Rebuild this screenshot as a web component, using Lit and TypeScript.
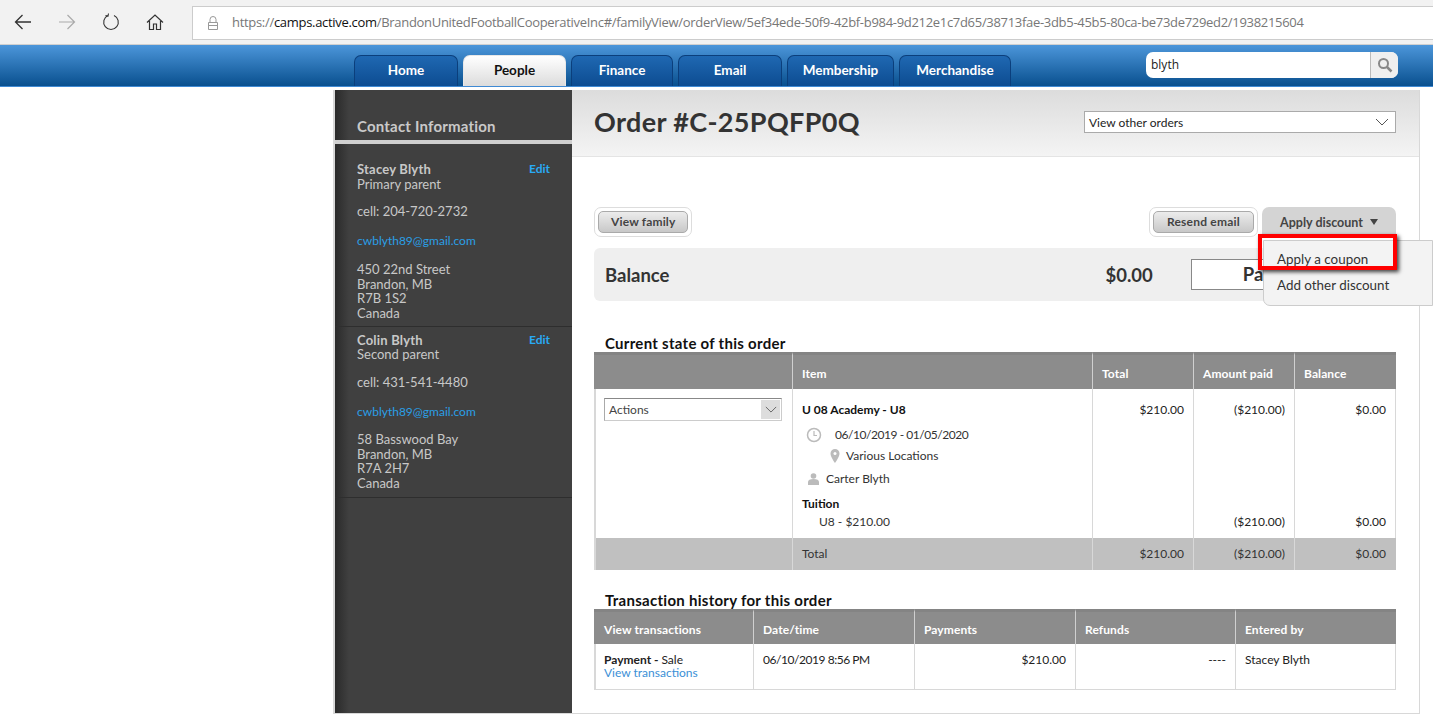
import { LitElement, html, css, svg } from "lit";
import { customElement } from "lit/decorators.js";

const TABS = ["Home", "People", "Finance", "Email", "Membership", "Merchandise"];
const TAB_W = [104, 103, 102, 104, 107, 112];
const chevron = svg`<path d="M1 1 L7 7 L13 1" fill="none" stroke="#555" stroke-width="1"/>`;

@customElement("app-root")
export class AppRoot extends LitElement {
  static styles = css`
    :host { display: block; width: 1433px; height: 714px; overflow: hidden; background: #fff; font-family: "Lato", "Open Sans", sans-serif; color: #222; font-size: 12px; }
    .chrome { height: 44px; background: #f2f2f2; display: flex; align-items: center; border-bottom: 1px solid #d0d0d0; box-sizing: content-box; }
    .nav { width: 192px; display: flex; flex: none; height: 100%; align-items: center; padding-left: 13px; gap: 24px; box-sizing: border-box; }
    .nav svg { width: 20px; height: 20px; flex: none; }
    .addr { flex: 1; height: 34px; margin-top: 1px; background: #fff; border: 1px solid #ccc; border-right: 0; display: flex; align-items: center; padding-left: 14px; gap: 13px; font: 13px/1 "Open Sans", sans-serif; color: #777; white-space: nowrap; overflow: hidden; box-sizing: border-box; letter-spacing: -0.305px; }
    .addr b { font-weight: 400; color: #111; }
    .blue { height: 42px; background: linear-gradient(#4c96da, #09508f); border-bottom: 1px solid #3f8ad4; box-sizing: border-box; display: flex; position: relative; padding-left: 354px; align-items: flex-end; }
    .tabs { display: flex; gap: 5px; }
    .tab { height: 31px; box-sizing: border-box; border: 1px solid #0b3f7c; border-bottom: 0; border-radius: 7px 7px 0 0; background: linear-gradient(#1f68b2, #0d4c91); color: #fff; font-weight: 700; font-size: 13.5px; padding-bottom: 2px; display: flex; align-items: center; justify-content: center; }
    .tab.on { background: linear-gradient(#fff, #dcdcdc); color: #111; border-color: #e8e8e8; }
    .search { margin-left: 135px; align-self: flex-start; margin-top: 7px; width: 252px; height: 26px; background: #fff; border-radius: 7px; display: flex; overflow: hidden; box-sizing: border-box; }
    .search span { flex: 1; padding-left: 5px; font: 12px/25px "Open Sans", sans-serif; color: #222; }
    .search i { width: 27px; background: #efefef; border-left: 1px solid #bbb; display: flex; align-items: center; justify-content: center; }
    .main { margin: 3px 0 0 333px; width: 1087px; height: 624px; display: flex; border-left: 2px solid #d8d8d8; border-bottom: 1px solid #d8d8d8; box-sizing: border-box; }
    .side { width: 237px; flex: none; background: linear-gradient(90deg, #2a2a2a, #404040 14px); color: #c8c8c8; font-size: 13px; line-height: 14.5px; }
    .side h2 { margin: 0; padding: 27px 0 0 22px; font-size: 15px; font-weight: 700; line-height: 18px; height: 23px; color: #c9c9c9; letter-spacing: 0.2px; }
    .rule { height: 4px; background: #d0d0d0; }
    .person { padding: 18px 22px 6px 22px; border-bottom: 1px solid #2e2e2e; height: 183px; box-sizing: border-box; }
    .person + .person { padding-top: 6px; height: 171px; }
    .person + .person .nm { margin-bottom: -1px; }
    .person + .person .cell { margin-top: 14px; }
    .person + .person .adr { margin-top: 13px; }
    .nm { display: flex; justify-content: space-between; font-weight: 700; letter-spacing: 0.2px; }
    .nm a { color: #29aaf4; font-size: 12px; letter-spacing: 0; }
    .person p { margin: 0; }
    .person .cell { margin-top: 13px; }
    .person .mail { color: #2a9fe6; font-size: 12px; margin-top: 15px; }
    .person .adr { margin-top: 14px; }
    .content { flex: 1; border-right: 1px solid #d8d8d8; min-width: 0; position: relative; }
    .top { height: 67px; background: linear-gradient(#dcdcdc, #f4f4f4); border-bottom: 1px solid #e4e4e4; display: flex; align-items: center; padding: 0 23px 4px 22px; justify-content: space-between; box-sizing: border-box; }
    h1 { margin: 0; font-size: 27px; font-weight: 700; color: #333; letter-spacing: 0.35px; }
    .select { width: 312px; height: 22px; margin-top: 2px; background: #fff; border: 1px solid #aaa; box-sizing: border-box; padding: 0 4px; display: flex; align-items: center; justify-content: space-between; font-size: 12px; }
    .select svg { width: 14px; height: 8px; margin-right: 2px; }
    .body { padding: 50px 23px 0 22px; }
    .btns { display: flex; align-items: flex-start; height: 41px; }
    .btnwrap { padding: 3px; border: 1px solid #ddd; border-radius: 7px; background: #fff; }
    .btn { height: 22px; box-sizing: border-box; padding: 0 12px; border: 1px solid #aaa; border-radius: 5px; background: linear-gradient(#ececec, #c8c8c8); color: #444; font-weight: 700; font-size: 12px; line-height: 20px; letter-spacing: 0.15px; }
    .resend { letter-spacing: 0.22px; padding: 0 13px; }
    .spacer { flex: 1; }
    .apply { width: 134px; height: 30px; margin-left: 4px; background: #d4d4d4; border-radius: 7px 7px 0 0; color: #444; font-weight: 700; font-size: 12.5px; display: flex; align-items: center; justify-content: center; gap: 7px; }
    .apply span { border: 4px solid transparent; border-top: 6px solid #444; border-bottom: 0; }
    .bal { height: 53px; background: #efefef; border-radius: 6px; display: flex; align-items: center; padding-left: 11px; font-size: 18.5px; font-weight: 700; color: #333; }
    .bal .amt { margin-left: 436px; }
    .paid { margin-left: 38px; width: 204px; height: 31px; background: #fff; border: 1px solid #888; box-sizing: border-box; padding-left: 51px; line-height: 29px; white-space: nowrap; }
    .menu { position: absolute; left: 691px; top: 150px; width: 170px; height: 66px; background: #f3f3f3; border: 1px solid #ccc; border-radius: 0 0 0 7px; box-sizing: border-box; font-size: 13.4px; color: #333; padding-left: 13px; z-index: 2; }
    .menu div { line-height: 26px; }
    .menu div:first-child { margin-top: 5px; }
    .red { position: absolute; left: -6px; top: -7px; width: 139px; height: 36px; border: 4px solid #f00; box-shadow: 2px 2px 4px rgba(0,0,0,.75); box-sizing: border-box; }
    h3 { margin: 0; padding-left: 11px; font-size: 15px; font-weight: 700; color: #111; line-height: 18px; letter-spacing: 0.28px; }
    .t1 { margin-top: 33px; }
    .grid { display: grid; border-left: 1px solid #d8d8d8; border-right: 1px solid #d8d8d8; font-size: 12px; }
    .g1 { grid-template-columns: 197px 300px 101px 101px 1fr; }
    .g2 { grid-template-columns: 158px 161px 161px 160px 1fr; border-bottom: 1px solid #d8d8d8; }
    .h { background: #8c8c8c; color: #fff; font-weight: 700; border-left: 1px solid #d0d0d0; border-top: 3px solid #848484; padding: 0 9px; display: flex; align-items: center; letter-spacing: 0.1px; }
    .h:first-child, .c:first-child, .f:first-child { border-left: 0; }
    .h:first-child, .f:first-child { margin-left: -1px; }
    .h:first-child { padding-left: 10px; }
    .h:nth-child(5), .f:last-child { margin-right: -1px; }
    .g1 .h { height: 37px; padding-top: 2px; box-sizing: border-box; }
    .g2 .h { height: 35px; padding-top: 2px; box-sizing: border-box; }
    .c { border-left: 1px solid #d8d8d8; padding: 0 9px; height: 149px; box-sizing: border-box; position: relative; }
    .g2 .c { height: 45px; padding-top: 9px; line-height: 13px; }
    .g2 .c:first-of-type { padding-left: 9px; }
    .r { text-align: right; }
    .f { background: #c0c0c0; height: 32px; border-left: 1px solid #d8d8d8; display: flex; align-items: center; padding: 0 9px 2px; justify-content: flex-end; box-sizing: border-box; color: #333; }
    .f:last-child { padding-right: 10px; }
    .f.l { justify-content: flex-start; }
    .actions { margin: 9px 0 0 -1px; width: 178px; height: 23px; border: 1px solid #ccc; border-top-color: #888; border-left-color: #aaa; box-sizing: border-box; display: flex; align-items: center; justify-content: space-between; padding: 1px 1px 1px 4px; color: #444; }
    .actions i { width: 19px; height: 100%; background: #ddd; display: flex; align-items: center; justify-content: center; }
    .actions svg { width: 12px; height: 7px; }
    .name { font-weight: 700; color: #111; margin-top: 14px; line-height: 14px; }
    .ln { display: flex; align-items: center; line-height: 14px; color: #333; }
    .ln svg { flex: none; }
    .date { letter-spacing: -0.45px; }
    .d1 { margin: 10px 0 0 4px; gap: 13px; }
    .d2 { margin: 6px 0 0 28px; gap: 6px; }
    .d3 { margin: 9px 0 0 6px; gap: 7px; }
    .d4 { margin-top: 11px; }
    .d5 { margin: 4px 0 0 17px; }
    .amt1 { padding-top: 14px; line-height: 14px; }
    .amt2 { position: absolute; right: 9px; bottom: 9px; line-height: 14px; }
    a { color: #3b8fd6; }
    .pay { margin-left: -1px; }
    .gap { margin-top: 21px; }
  `;

  render() {
    return html`
      <div class="chrome">
        <div class="nav">
          <svg viewBox="0 0 20 20"><path d="M18 10H2.500M9.500 3l-7 7 7 7" fill="none" stroke="#333" stroke-width="1.300"/></svg>
          <svg viewBox="0 0 20 20"><path d="M2 10h15.500M10.500 3l7 7-7 7" fill="none" stroke="#aaa" stroke-width="1.200"/></svg>
          <svg viewBox="0 0 20 20"><path d="M7 3.500A7.300 7.300 0 1 0 13 3.500M7.500 1.500L7 4l-2.500-.5" fill="none" stroke="#333" stroke-width="1.100"/></svg>
          <svg viewBox="0 0 20 20"><path d="M2 10.500L10 3l8 7.500M4.500 9v8.500h4V12h3v5.500h4V9" fill="none" stroke="#333" stroke-width="1.200"/></svg>
        </div>
        <div class="addr">
          <svg width="12" height="14" viewBox="0 0 12 14"><path d="M3 6V3.500a3 3 0 0 1 6 0V6M1.500 6.500h9v7h-9zM1.500 9.500h9" fill="none" stroke="#999"/></svg>
          <span>https://<b>camps.active.com</b>/BrandonUnitedFootballCooperativeInc#/familyView/orderView/5ef34ede-50f9-42bf-b984-9d212e1c7d65/38713fae-3db5-45b5-80ca-be73de729ed2/1938215604</span>
        </div>
      </div>
      <div class="blue">
        <div class="tabs">
          ${TABS.map((t, i) => html`<div class="tab ${t === "People" ? "on" : ""}" style="width:${TAB_W[i]}px">${t}</div>`)}
        </div>
        <div class="search"><span>blyth</span><i><svg width="16" height="16" viewBox="0 0 16 16"><circle cx="6.500" cy="6.500" r="4.500" fill="none" stroke="#888" stroke-width="2"/><path d="M10 10l4.500 4.500" stroke="#888" stroke-width="2.500"/></svg></i></div>
      </div>
      <div class="main">
        <aside class="side">
          <h2>Contact Information</h2>
          <div class="rule"></div>
          <div class="person">
            <div class="nm"><span>Stacey Blyth</span><a>Edit</a></div>
            <p>Primary parent</p>
            <p class="cell">cell: 204-720-2732</p>
            <p class="mail">cwblyth89@gmail.com</p>
            <p class="adr">450 22nd Street<br />Brandon, MB<br />R7B 1S2<br />Canada</p>
          </div>
          <div class="person">
            <div class="nm"><span>Colin Blyth</span><a>Edit</a></div>
            <p>Second parent</p>
            <p class="cell">cell: 431-541-4480</p>
            <p class="mail">cwblyth89@gmail.com</p>
            <p class="adr">58 Basswood Bay<br />Brandon, MB<br />R7A 2H7<br />Canada</p>
          </div>
        </aside>
        <section class="content">
          <div class="top">
            <h1>Order #C-25PQFP0Q</h1>
            <div class="select">View other orders<svg viewBox="0 0 14 8">${chevron}</svg></div>
          </div>
          <div class="body">
            <div class="btns">
              <div class="btnwrap"><div class="btn">View family</div></div>
              <div class="spacer"></div>
              <div class="btnwrap"><div class="btn resend">Resend email</div></div>
              <div class="apply">Apply discount <span></span></div>
            </div>
            <div class="bal"><span>Balance</span><span class="amt">$0.00</span><div class="paid">Paid in full</div></div>
            <div class="t1"><h3>Current state of this order</h3></div>
            <div class="grid g1">
              <div class="h"></div><div class="h">Item</div><div class="h">Total</div><div class="h">Amount paid</div><div class="h">Balance</div>
              <div class="c"><div class="actions">Actions<i><svg viewBox="0 0 14 8">${chevron}</svg></i></div></div>
              <div class="c">
                <div class="name">U 08 Academy - U8</div>
                <div class="ln d1"><svg width="16" height="16" viewBox="0 0 16 16"><circle cx="8" cy="8" r="6.500" fill="none" stroke="#bbb" stroke-width="1.500"/><path d="M8 4v4.500h3" fill="none" stroke="#bbb" stroke-width="1.200"/></svg><span class="date">06/10/2019 - 01/05/2020</span></div>
                <div class="ln d2"><svg width="10" height="14" viewBox="0 0 10 14"><path d="M5 0a4.500 4.500 0 0 0-4.500 4.500C.5 8 5 14 5 14s4.500-6 4.500-9.500A4.500 4.500 0 0 0 5 0z" fill="#bbb"/><circle cx="5" cy="4.500" r="1.500" fill="#fff"/></svg>Various Locations</div>
                <div class="ln d3"><svg width="11" height="12" viewBox="0 0 11 12"><circle cx="5.500" cy="3" r="2.800" fill="#bbb"/><path d="M0 12V9c0-2 2-3 5.500-3S11 7 11 9v3z" fill="#bbb"/></svg>Carter Blyth</div>
                <div class="name d4">Tuition</div>
                <div class="ln d5">U8 - $210.00</div>
              </div>
              <div class="c r"><div class="amt1">$210.00</div></div>
              <div class="c r"><div class="amt1">($210.00)</div><div class="amt2">($210.00)</div></div>
              <div class="c r"><div class="amt1">$0.00</div><div class="amt2">$0.00</div></div>
              <div class="f"></div><div class="f l">Total</div><div class="f">$210.00</div><div class="f">($210.00)</div><div class="f">$0.00</div>
            </div>
            <div class="gap"><h3>Transaction history for this order</h3></div>
            <div class="grid g2">
              <div class="h">View transactions</div><div class="h">Date/time</div><div class="h">Payments</div><div class="h">Refunds</div><div class="h">Entered by</div>
              <div class="c"><div class="pay"><b>Payment - </b>Sale<br /><a>View transactions</a></div></div>
              <div class="c date">06/10/2019 8:56 PM</div>
              <div class="c r">$210.00</div>
              <div class="c r">----</div>
              <div class="c">Stacey Blyth</div>
            </div>
          </div>
          <div class="menu"><div>Apply a coupon</div><div>Add other discount</div><span class="red"></span></div>
        </section>
      </div>
    `;
  }
}
